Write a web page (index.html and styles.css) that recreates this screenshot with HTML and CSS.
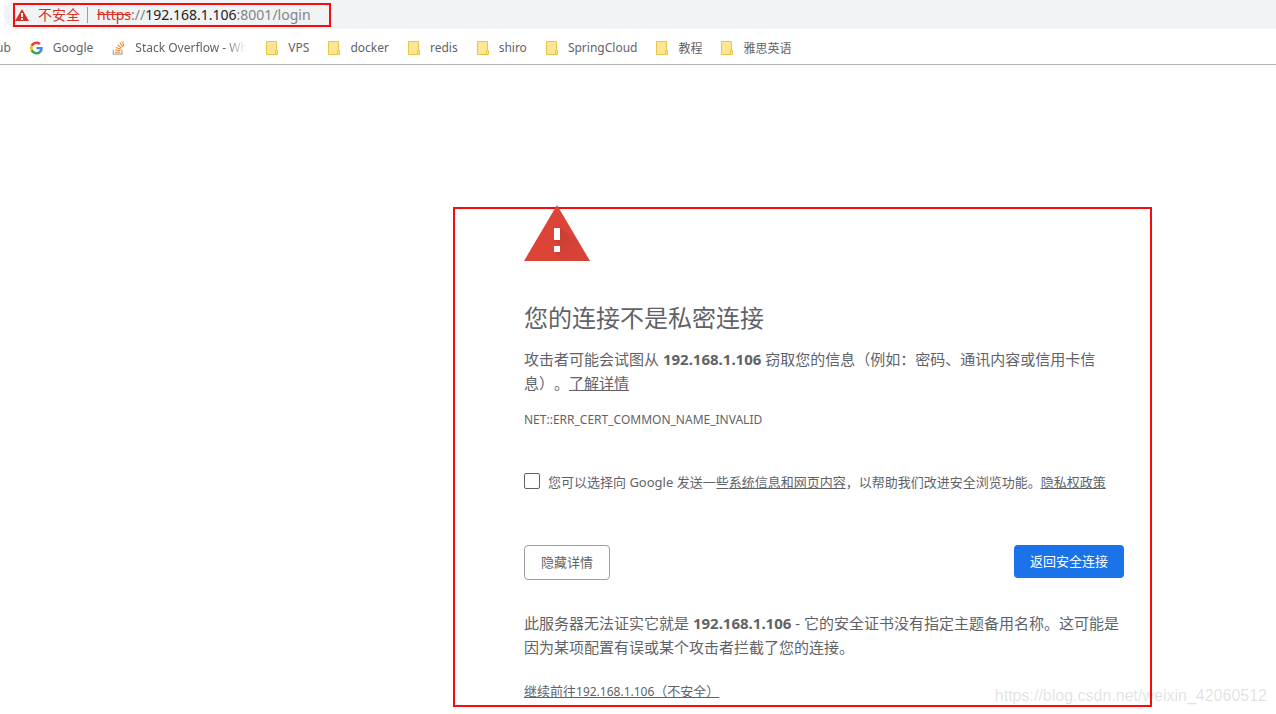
FILE: index.html
```html
<!DOCTYPE html>
<html lang="zh-CN">
<head>
<meta charset="utf-8">
<title>隐私设置错误</title>
<link rel="stylesheet" href="styles.css">
</head>
<body>
<svg class="sprite" aria-hidden="true">
  <symbol id="folder" viewBox="0 0 12 14">
    <path d="M.5.5h10v13H.5z" fill="#ffe694" stroke="#e8c547"/>
    <path d="M9.500 9.500h2v4h-2z" fill="#ffe694" stroke="#e8c547"/>
  </symbol>
</svg>
<header class="browser">
  <div class="toolbar">
    <div class="omnibox">
      <div class="address">
        <svg class="address-icon" viewBox="0 0 14 12" aria-hidden="true">
          <path d="M7 0l7 12H0z" fill="#d93025"/>
          <path d="M6 4h2v4H6zM6 9h2v2H6z" fill="#fff"/>
        </svg>
        <span class="insecure">不安全</span>
        <span class="url"><s class="scheme">https</s>://<span class="host">192.168.1.106</span>:8001/login</span>
      </div>
    </div>
  </div>
  <nav class="bookmarks">
    <a class="bookmark" href="#">ub</a>
    <a class="bookmark" href="#">
      <svg class="site-icon" viewBox="0 0 48 48" aria-hidden="true">
        <path fill="#ea4335" d="M24 9.500c3.540 0 6.710 1.220 9.210 3.600l6.850-6.850C35.900 2.380 30.470 0 24 0 14.620 0 6.510 5.380 2.560 13.220l7.980 6.190C12.430 13.720 17.740 9.500 24 9.500z"/>
        <path fill="#4285f4" d="M46.980 24.550c0-1.570-.15-3.090-.38-4.550H24v9.020h12.940c-.58 2.960-2.260 5.480-4.780 7.180l7.730 6c4.510-4.180 7.090-10.360 7.090-17.650z"/>
        <path fill="#fbbc05" d="M10.530 28.590c-.48-1.450-.76-2.990-.76-4.590s.27-3.140.76-4.590l-7.980-6.190C.92 16.460 0 20.120 0 24s.92 7.540 2.560 10.780l7.970-6.190z"/>
        <path fill="#34a853" d="M24 48c6.480 0 11.930-2.130 15.890-5.810l-7.730-6c-2.150 1.450-4.920 2.300-8.160 2.300-6.260 0-11.570-4.220-13.470-9.910l-7.980 6.190C6.510 42.620 14.620 48 24 48z"/>
      </svg>Google</a>
    <a class="bookmark" href="#">
      <svg class="site-icon" viewBox="0 0 14 16" aria-hidden="true">
        <path d="M1 10v5h10v-5" fill="none" stroke="#aaa" stroke-width="1.400"/>
        <path d="M3 12.800h6M3.200 10.300l6 .8M4 7.400l5.700 2M5.800 4.400l4.900 3.700M8.600 1.800l3.400 5M11.800.5l1 5.500" fill="none" stroke="#f48024" stroke-width="1.200"/>
      </svg><span class="faded">Stack Overflow - Wh</span></a>
    <a class="bookmark" href="#"><svg class="folder"><use href="#folder"/></svg>VPS</a>
    <a class="bookmark" href="#"><svg class="folder"><use href="#folder"/></svg>docker</a>
    <a class="bookmark" href="#"><svg class="folder"><use href="#folder"/></svg>redis</a>
    <a class="bookmark" href="#"><svg class="folder"><use href="#folder"/></svg>shiro</a>
    <a class="bookmark" href="#"><svg class="folder"><use href="#folder"/></svg>SpringCloud</a>
    <a class="bookmark" href="#"><svg class="folder"><use href="#folder"/></svg>教程</a>
    <a class="bookmark" href="#"><svg class="folder"><use href="#folder"/></svg>雅思英语</a>
  </nav>
</header>
<main class="warning">
  <svg class="warning-icon" viewBox="0 0 66 56" aria-hidden="true">
    <defs>
      <linearGradient id="shade" x1="0" y1="0" x2="1" y2="1">
        <stop offset="0" stop-color="#9c2f26" stop-opacity=".45"/>
        <stop offset=".6" stop-color="#b83a2f" stop-opacity=".12"/>
      </linearGradient>
    </defs>
    <path d="M33 0l33 56H0z" fill="#db4437"/>
    <path d="M36 23l18 13 12 20H39l-9-9 6-6-6-6h6z" fill="url(#shade)"/>
    <path d="M30 23h6v12h-6zM30 41h6v6h-6z" fill="#fff"/>
  </svg>
  <h1 class="title">您的连接不是私密连接</h1>
  <p class="text">攻击者可能会试图从 <strong>192.168.1.106</strong> 窃取您的信息（例如：密码、通讯内容或信用卡信息）。<a href="#">了解详情</a></p>
  <p class="code">NET::ERR_CERT_COMMON_NAME_INVALID</p>
  <div class="optin">
    <input class="checkbox" type="checkbox" id="report">
    <label for="report">您可以选择向 Google 发送一些<a href="#">系统信息和网页内容</a>，以帮助我们改进安全浏览功能。<a href="#">隐私权政策</a></label>
  </div>
  <div class="actions">
    <button class="button" type="button">隐藏详情</button>
    <button class="button primary" type="button">返回安全连接</button>
  </div>
  <p class="text">此服务器无法证实它就是 <strong>192.168.1.106</strong> - 它的安全证书没有指定主题备用名称。这可能是因为某项配置有误或某个攻击者拦截了您的连接。</p>
  <a class="proceed" href="#">继续前往<span class="address-text">192.168.1.106</span>（不安全）</a>
</main>
<div class="watermark">https://blog.csdn.net/weixin_42060512</div>
</body>
</html>
```
FILE: styles.css
```css
* { box-sizing: border-box; }
body {
  margin: 0;
  background: #fff;
  color: #5f6368;
  font-family: "Noto Sans", "Noto Sans CJK SC", sans-serif;
  text-spacing-trim: space-all;
}
a { color: inherit; }
.sprite { display: none; }
.browser { border-bottom: 1px solid #b4b4b4; }
.toolbar { padding-left: 4px; }
.omnibox {
  padding: 3px 0 2px 9px;
  background: #f1f3f4;
  border-radius: 14px 0 0 14px;
}
.address {
  display: flex;
  align-items: center;
  width: 318px;
  height: 24px;
  border: 2px solid #fa0a0a;
  font-size: 14px;
  line-height: 20px;
  color: #80868b;
}
.address-icon { width: 14px; height: 12px; }
.insecure {
  margin-left: 9px;
  padding-right: 8px;
  color: #d93025;
  position: relative;
}
.insecure::after {
  content: "";
  position: absolute;
  right: 0;
  top: 2px;
  height: 16px;
  border-right: 1px solid #9aa0a6;
}
.url { margin-left: 9px; }
.scheme { color: #d93025; }
.host { color: #202124; }
.bookmarks {
  display: flex;
  align-items: center;
  gap: 19px;
  height: 35px;
  margin-left: -4px;
  padding-top: 2px;
  font-size: 12px;
  white-space: nowrap;
}
.bookmark {
  display: flex;
  align-items: center;
  gap: 10px;
  text-decoration: none;
}
.site-icon { width: 13px; height: 14px; }
.folder { width: 12px; height: 14px; }
.faded {
  width: 112px;
  -webkit-mask-image: linear-gradient(to right, #000 80%, transparent);
  mask-image: linear-gradient(to right, #000 80%, transparent);
}
.warning {
  max-width: 699px;
  margin: 142px 124px 0 auto;
  padding: 0 26px 3px 69px;
  border: 2px solid #fa0a0a;
}
.warning-icon {
  display: block;
  width: 66px;
  height: 56px;
  margin-top: -4px;
}
.title {
  margin: 41px 0 13px;
  font-size: 24px;
  font-weight: 400;
  line-height: 32px;
}
.text {
  margin: 0;
  font-size: 15px;
  line-height: 24px;
}
.code {
  margin: 15px 0 0;
  font-size: 12px;
  line-height: 20px;
}
.optin {
  display: flex;
  gap: 8px;
  margin-top: 42px;
  font-size: 13px;
  line-height: 20px;
  white-space: nowrap;
}
.address-text { font-size: 12px; }
.checkbox {
  appearance: none;
  width: 16px;
  height: 16px;
  margin: 1px 0 0;
  border: 1px solid #5f6368;
  border-radius: 2px;
}
.actions {
  display: flex;
  justify-content: space-between;
  align-items: flex-start;
  margin: 53px 0 31px;
}
.button {
  padding: 7px 16px;
  border: 1px solid #9aa0a6;
  border-radius: 4px;
  background: #fff;
  color: #5f6368;
  font: inherit;
  font-size: 13px;
  line-height: 19px;
}
.primary {
  border: 0;
  background: #1a73e8;
  color: #fff;
}
.proceed {
  display: block;
  width: fit-content;
  margin-top: 22px;
  font-size: 13px;
  line-height: 20px;
}
.watermark {
  position: absolute;
  right: 9px;
  bottom: 8px;
  font: 16px/20px "Liberation Sans", sans-serif;
  color: rgba(120, 120, 120, .22);
}
```
